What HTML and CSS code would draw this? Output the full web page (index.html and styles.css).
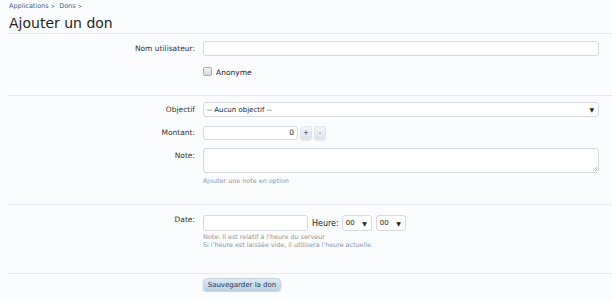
FILE: index.html
```html
<!DOCTYPE html>
<html lang="fr">
<head>
<meta charset="utf-8">
<title>Ajouter un don</title>
<link rel="stylesheet" href="styles.css">
</head>
<body>
<div class="page">
  <nav class="crumbs"><a>Applications</a> <span class="sep">&gt;</span> &nbsp;<a>Dons</a> <span class="sep">&gt;</span></nav>
  <h1 class="title">Ajouter un don</h1>
  <form class="form">
    <section class="block b1">
      <div class="row">
        <label class="lbl">Nom utilisateur:</label>
        <div class="ctl"><span class="input wide"></span></div>
      </div>
      <div class="row check-row">
        <div class="lbl"></div>
        <div class="ctl"><span class="checkbox"></span><span class="check-text">Anonyme</span></div>
      </div>
    </section>
    <section class="block b2">
      <div class="row">
        <label class="lbl">Objectif</label>
        <div class="ctl"><span class="select wide"><span>-- Aucun objectif --</span><span class="arrow">▼</span></span></div>
      </div>
      <div class="row">
        <label class="lbl">Montant:</label>
        <div class="ctl inline"><span class="input num">0</span><span class="btn-sm">+</span><span class="btn-sm">-</span></div>
      </div>
      <div class="row">
        <label class="lbl">Note:</label>
        <div class="ctl"><span class="textarea wide"><span class="grip"></span></span><p class="hint">Ajouter une note en option</p></div>
      </div>
    </section>
    <section class="block b3">
      <div class="row">
        <label class="lbl date-lbl">Date:</label>
        <div class="ctl">
          <div class="inline"><span class="input date"></span><span class="heure">Heure:</span><span class="select small"><span>00</span><span class="arrow">▼</span></span><span class="select small"><span>00</span><span class="arrow">▼</span></span></div>
          <p class="hint hint-tight">Note: Il est relatif à l'heure du serveur<br>Si l'heure est laissée vide, il utilisera l'heure actuelle.</p>
        </div>
      </div>
    </section>
    <section class="submit">
      <div class="lbl"></div>
      <div class="ctl"><span class="button">Sauvegarder la don</span></div>
    </section>
  </form>
</div>
</body>
</html>
```
FILE: styles.css
```css
html, body { margin: 0; padding: 0; background: #fbfcfe; }
body { font-family: "DejaVu Sans", Verdana, sans-serif; color: #141414; font-size: 7.5px; }
.page { padding: 2px 0 0 8px; }
.crumbs { font-size: 6.5px; color: #3d6283; height: 9px; line-height: 9px; padding-left: 1px; }
.crumbs .sep { font-size: 5px; }
.title { margin: 3px 0 0 1px; font-size: 14px; font-weight: normal; color: #1f1f1f; line-height: 19px; height: 19px; }
.block { border-top: 1px solid #e4eaef; padding-top: 6px; }
.b1 { padding-top: 7px; padding-bottom: 8px; }
.b2 { padding-bottom: 11px; }
.b3 { padding-top: 10px; padding-bottom: 16px; }
.row { display: flex; gap: 8px; margin-bottom: 8px; min-height: 15px; }
.lbl { width: 187px; flex: none; text-align: right; color: #333; line-height: 15px; }
.ctl { flex: 1; display: flex; flex-direction: column; align-items: flex-start; }
.inline { display: flex; flex-direction: row; align-items: center; }
.input, .select, .textarea { box-sizing: border-box; background: #fff; border: 1px solid #d6dade; border-radius: 3px; height: 15px; }
.wide { width: 396px; }
.check-row .ctl { flex-direction: row; align-items: center; }
.checkbox { display: inline-block; box-sizing: border-box; width: 9px; height: 9px; border: 1px solid #a9abae; border-radius: 2px; background: linear-gradient(#f4f4f4, #d9d9d9); }
.check-text { margin-left: 4px; line-height: 9px; margin-top: 2px; color: #222; }
.select { display: flex; align-items: center; justify-content: space-between; padding: 0 4px 0 3px; font-size: 7px; color: #222; }
.arrow { font-size: 6px; }
.num { width: 95px; height: 14px; text-align: right; padding-right: 3px; line-height: 12px; }
.btn-sm { box-sizing: border-box; width: 12px; height: 14px; margin-left: 2px; border-radius: 3px; background: linear-gradient(#f3f5f9, #dde3eb); border: 1px solid #e0e5ec; box-shadow: 0 1px 1px rgba(0,0,0,0.08); text-align: center; line-height: 12px; font-size: 7px; color: #333; }
.textarea { height: 25px; position: relative; }
.grip { position: absolute; right: 1px; bottom: 1px; width: 4px; height: 4px; background: linear-gradient(135deg, transparent 45%, #bbb 45%, #bbb 55%, transparent 55%, transparent 70%, #bbb 70%, #bbb 80%, transparent 80%); }
.hint { margin: 4px 0 0; font-size: 6.4px; color: #8f959a; line-height: 8px; }
.hint-tight { margin-top: 2px; }
.date { width: 105px; height: 16px; }
.heure { margin: 0 3px 0 4px; font-size: 8px; color: #222; }
.small { width: 30px; height: 16px; margin-right: 4px; font-size: 7px; }
.date-lbl { line-height: 10px; }
.submit { border-top: 1px solid #e4eaef; display: flex; gap: 8px; padding-top: 4px; }
.button { display: inline-block; box-sizing: border-box; width: 78px; height: 14px; border-radius: 4px; background: linear-gradient(#dde9f4, #b8cfe3); border: 1px solid #c6d6e5; text-align: center; line-height: 12px; font-size: 7px; color: #1e3a55; box-shadow: 0 1px 2px rgba(0,0,0,0.18); }
```
